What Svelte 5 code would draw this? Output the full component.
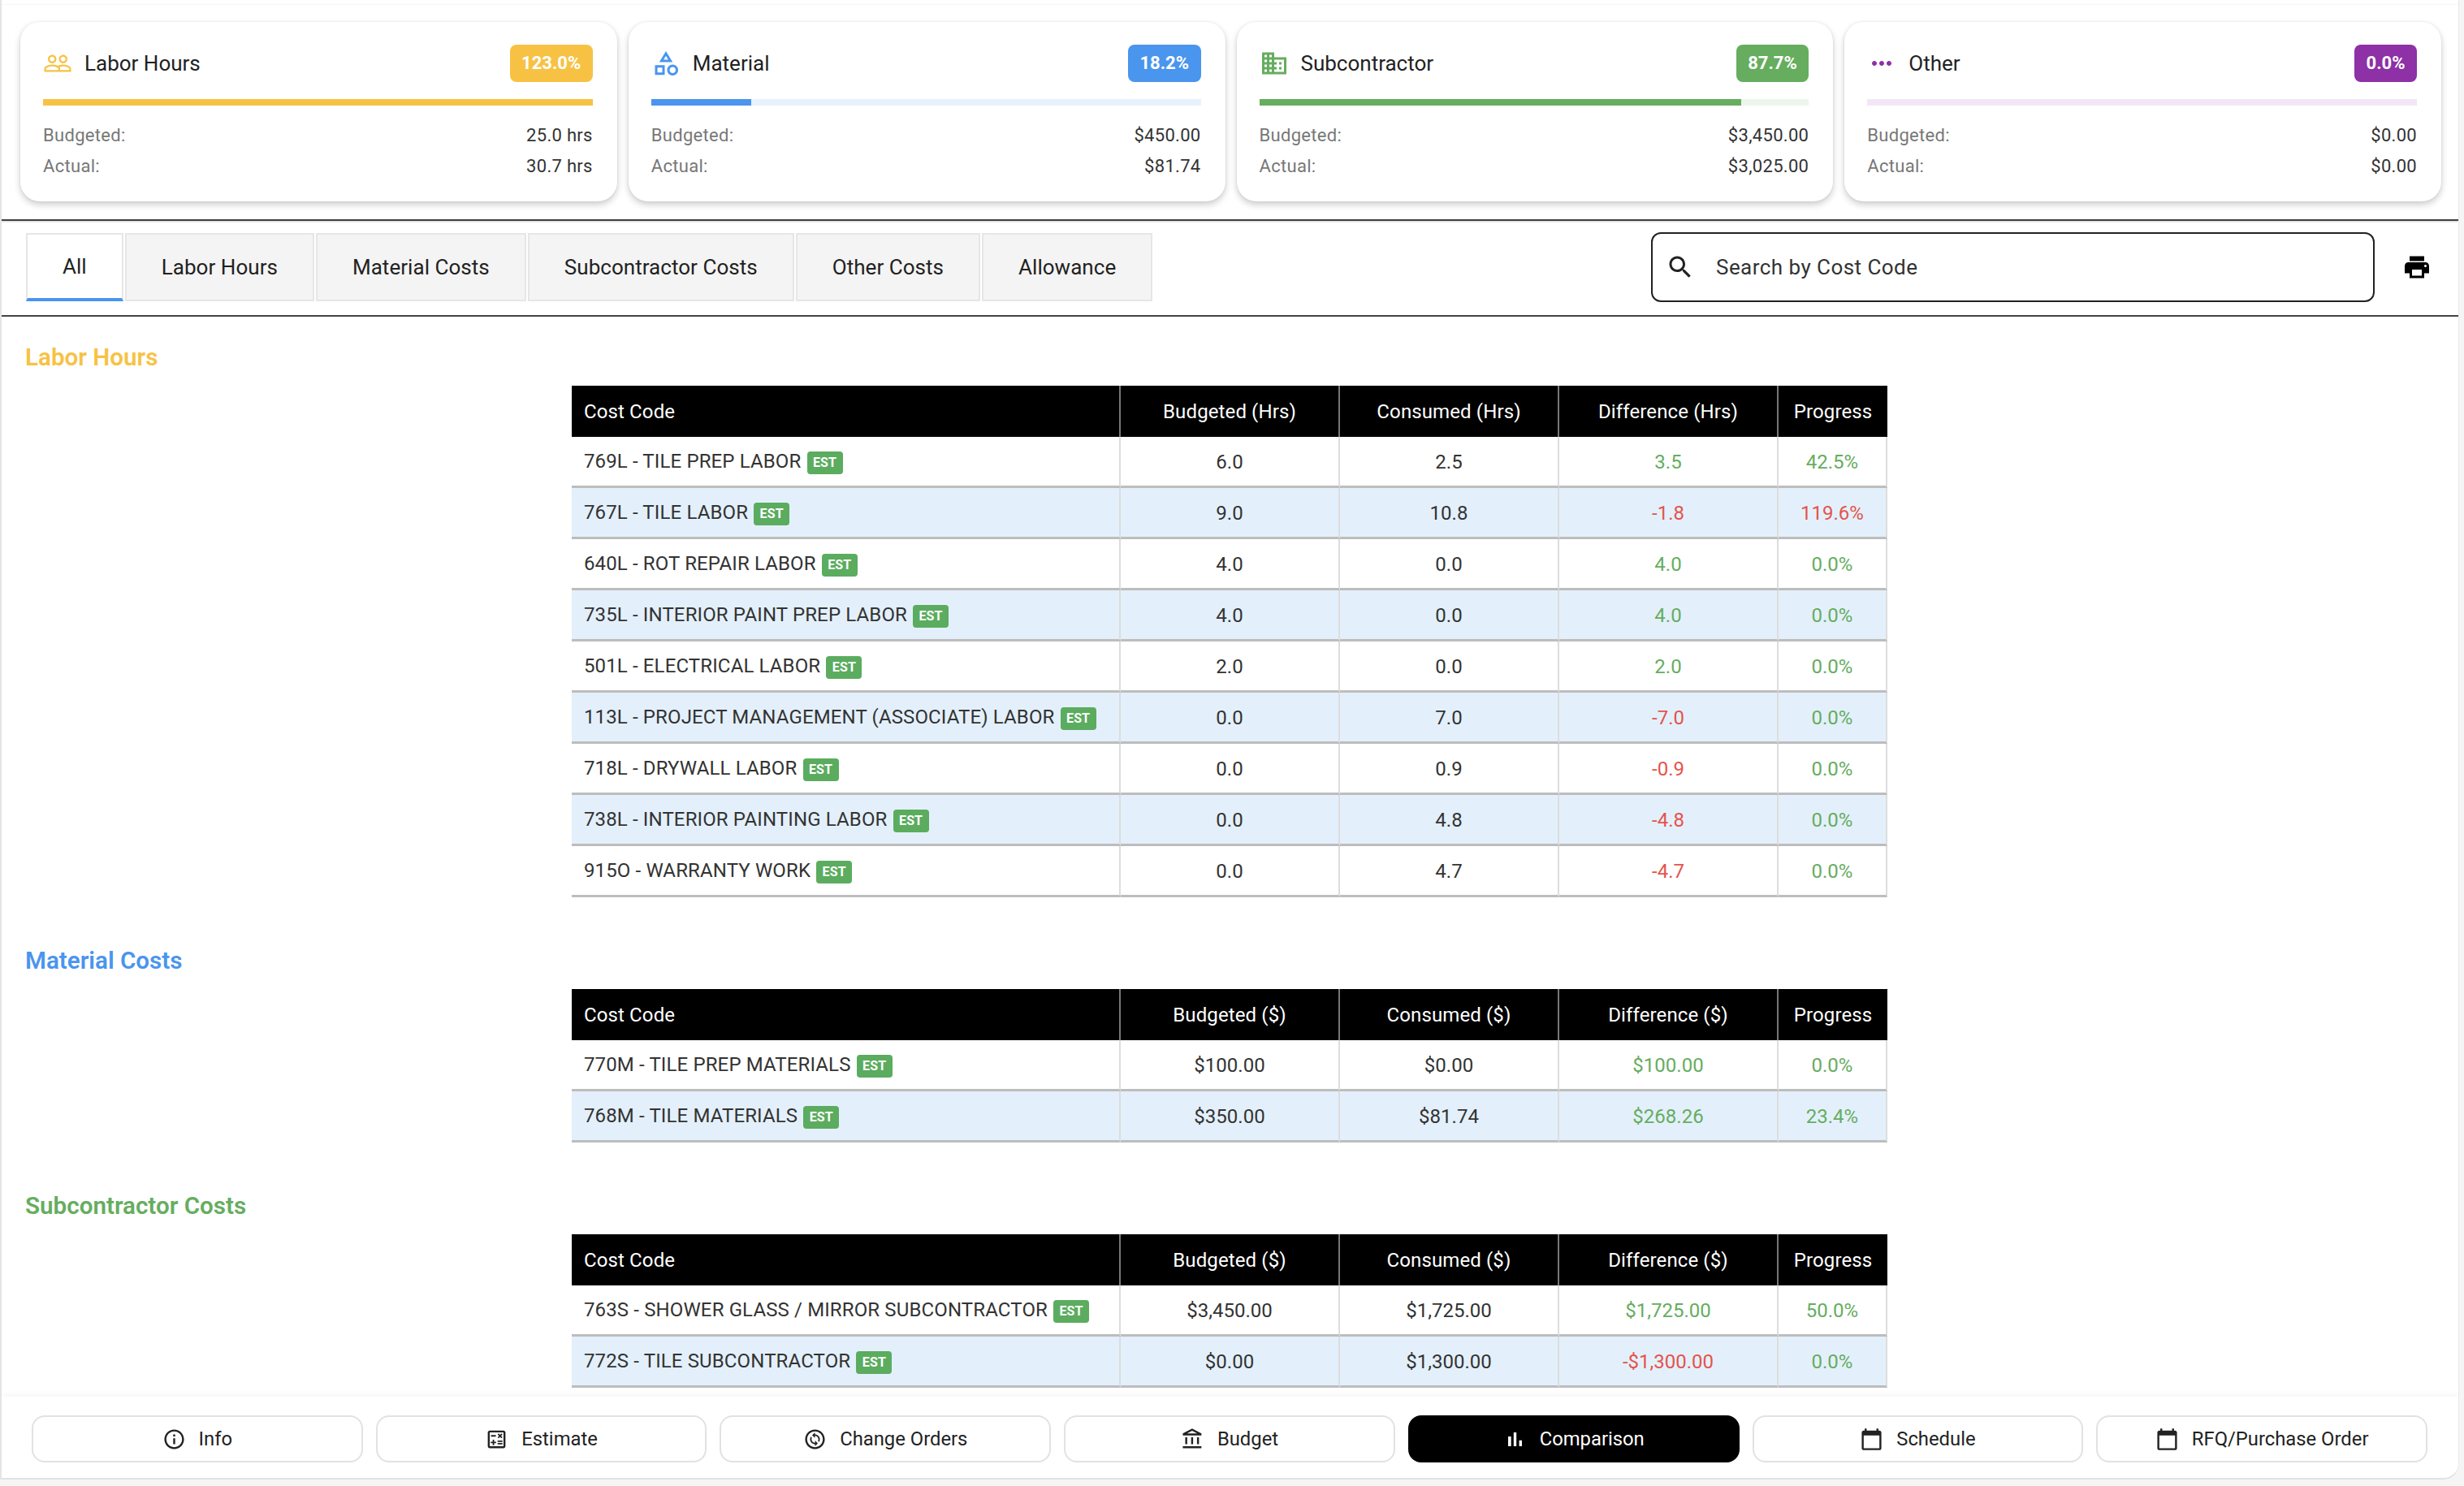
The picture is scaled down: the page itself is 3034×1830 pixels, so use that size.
<script>
  const icons = {
    people: "M16.5 13c-1.2 0-3.07.34-4.5 1-1.43-.67-3.3-1-4.5-1C5.33 13 1 14.08 1 16.25V19h22v-2.75c0-2.17-4.33-3.25-6.5-3.25zm-4 4.5h-10v-1.25c0-.54 2.56-1.75 5-1.75s5 1.21 5 1.75v1.25zm9 0H14v-1.25c0-.46-.2-.86-.52-1.22.88-.3 1.96-.53 3.02-.53 2.44 0 5 1.21 5 1.75v1.25zM7.5 12c1.93 0 3.5-1.57 3.5-3.5S9.43 5 7.5 5 4 6.57 4 8.5 5.57 12 7.5 12zm0-5.5c1.1 0 2 .9 2 2s-.9 2-2 2-2-.9-2-2 .9-2 2-2zm9 5.5c1.93 0 3.5-1.57 3.5-3.5S18.43 5 16.5 5 13 6.57 13 8.5s1.57 3.5 3.5 3.5zm0-5.5c1.1 0 2 .9 2 2s-.9 2-2 2-2-.9-2-2 .9-2 2-2z",
    category: "M12 2l-5.5 9h11L12 2zm0 3.84L13.93 9h-3.87L12 5.84zM17.5 13c-2.49 0-4.5 2.01-4.5 4.5s2.01 4.5 4.5 4.5 4.5-2.01 4.5-4.5-2.01-4.5-4.5-4.5zm0 7c-1.38 0-2.5-1.12-2.5-2.5s1.12-2.5 2.5-2.5 2.5 1.12 2.5 2.5-1.12 2.5-2.5 2.5zM3 21.5h8v-8H3v8zm2-6h4v4H5v-4z",
    domain: "M12 7V3H2v18h20V7H12zM6 19H4v-2h2v2zm0-4H4v-2h2v2zm0-4H4V9h2v2zm0-4H4V5h2v2zm4 12H8v-2h2v2zm0-4H8v-2h2v2zm0-4H8V9h2v2zm0-4H8V5h2v2zm10 12h-8v-2h2v-2h-2v-2h2v-2h-2V9h8v10zm-2-8h-2v2h2v-2zm0 4h-2v2h2v-2z",
    more: "M6 10c-1.1 0-2 .9-2 2s.9 2 2 2 2-.9 2-2-.9-2-2-2zm12 0c-1.1 0-2 .9-2 2s.9 2 2 2 2-.9 2-2-.9-2-2-2zm-6 0c-1.1 0-2 .9-2 2s.9 2 2 2 2-.9 2-2-.9-2-2-2z",
    search: "M15.5 14h-.79l-.28-.27C15.41 12.59 16 11.11 16 9.5 16 5.91 13.09 3 9.5 3S3 5.91 3 9.5 5.91 16 9.5 16c1.61 0 3.09-.59 4.23-1.57l.27.28v.79l5 4.99L20.49 19l-4.99-5zm-6 0C7.01 14 5 11.99 5 9.5S7.01 5 9.5 5 14 7.01 14 9.5 11.99 14 9.5 14z",
    print: "M19 8H5c-1.66 0-3 1.34-3 3v6h4v4h12v-4h4v-6c0-1.66-1.34-3-3-3zm-3 11H8v-5h8v5zm3-7c-.55 0-1-.45-1-1s.45-1 1-1 1 .45 1 1-.45 1-1 1zm-1-9H6v4h12V3z",
    info: "M11 7h2v2h-2zm0 4h2v6h-2zm1-9C6.48 2 2 6.48 2 12s4.48 10 10 10 10-4.48 10-10S17.52 2 12 2zm0 18c-4.41 0-8-3.59-8-8s3.59-8 8-8 8 3.59 8 8-3.59 8-8 8z",
    calc: "M19 3H5c-1.1 0-2 .9-2 2v14c0 1.1.9 2 2 2h14c1.1 0 2-.9 2-2V5c0-1.1-.9-2-2-2zm0 16H5V5h14v14zM6.25 7.72h5v1.5h-5zM13 15.75h5v1.5h-5zM13 13.25h5v1.5h-5zM8 18h1.5v-2h2v-1.5h-2v-2H8v2H6V16h2zM14.09 10.95l1.41-1.41 1.41 1.41 1.06-1.06-1.41-1.42 1.41-1.41L16.91 6 15.5 7.41 14.09 6l-1.06 1.06 1.41 1.41-1.41 1.42z",
    change: "M12 2C6.48 2 2 6.48 2 12s4.48 10 10 10 10-4.48 10-10S17.52 2 12 2zm0 18c-4.41 0-8-3.59-8-8s3.59-8 8-8 8 3.59 8 8-3.59 8-8 8zM12.06 19v-2.01H12c-1.28 0-2.56-.49-3.54-1.46-1.71-1.71-1.92-4.35-.64-6.29l1.1 1.1c-.71 1.33-.53 3.01.59 4.13.7.7 1.62 1.03 2.54 1.01v-2.14l2.83 2.83L12.06 19zm4.11-4.24l-1.1-1.1c.71-1.33.53-3.01-.59-4.13C13.79 8.84 12.9 8.5 12 8.5h-.06v2.15L9.11 7.83 11.94 5v2.02c1.3-.02 2.61.45 3.6 1.45 1.7 1.7 1.91 4.35.63 6.29z",
    bank: "M6.5 10h-2v7h2v-7zm6 0h-2v7h2v-7zm8.5 9H2v2h19v-2zm-2.5-9h-2v7h2v-7zm-7-6.74L16.71 6H6.29l5.21-2.74m0-2.26L2 6v2h19V6l-9.5-5z",
    bars: "M5 9.2h3V19H5zM10.6 5h2.8v14h-2.8zm5.6 8H19v6h-2.8z",
    calendar: "M20 3h-1V1h-2v2H7V1H5v2H4c-1.1 0-2 .9-2 2v16c0 1.1.9 2 2 2h16c1.1 0 2-.9 2-2V5c0-1.1-.9-2-2-2zm0 18H4V8h16v13z"
  };

  const cards = [
    { title: "Labor Hours", icon: "people", color: "#f7c244", track: "#fdf3da", pct: "123.0%", fill: 100, budgeted: "25.0 hrs", actual: "30.7 hrs" },
    { title: "Material", icon: "category", color: "#4a95ee", track: "#e7f2fd", pct: "18.2%", fill: 18.2, budgeted: "$450.00", actual: "$81.74" },
    { title: "Subcontractor", icon: "domain", color: "#66ad5f", track: "#edf6ed", pct: "87.7%", fill: 87.7, budgeted: "$3,450.00", actual: "$3,025.00" },
    { title: "Other", icon: "more", color: "#8e30a6", track: "#f3e6f7", pct: "0.0%", fill: 0, budgeted: "$0.00", actual: "$0.00" }
  ];

  const tabs = ["All", "Labor Hours", "Material Costs", "Subcontractor Costs", "Other Costs", "Allowance"];

  const sections = [
    {
      title: "Labor Hours", color: "#f7c244", unit: "Hrs",
      rows: [
        ["769L - TILE PREP LABOR", "6.0", "2.5", "3.5", "42.5%"],
        ["767L - TILE LABOR", "9.0", "10.8", "-1.8", "119.6%", "red"],
        ["640L - ROT REPAIR LABOR", "4.0", "0.0", "4.0", "0.0%"],
        ["735L - INTERIOR PAINT PREP LABOR", "4.0", "0.0", "4.0", "0.0%"],
        ["501L - ELECTRICAL LABOR", "2.0", "0.0", "2.0", "0.0%"],
        ["113L - PROJECT MANAGEMENT (ASSOCIATE) LABOR", "0.0", "7.0", "-7.0", "0.0%"],
        ["718L - DRYWALL LABOR", "0.0", "0.9", "-0.9", "0.0%"],
        ["738L - INTERIOR PAINTING LABOR", "0.0", "4.8", "-4.8", "0.0%"],
        ["915O - WARRANTY WORK", "0.0", "4.7", "-4.7", "0.0%"]
      ]
    },
    {
      title: "Material Costs", color: "#4a95ee", unit: "$",
      rows: [
        ["770M - TILE PREP MATERIALS", "$100.00", "$0.00", "$100.00", "0.0%"],
        ["768M - TILE MATERIALS", "$350.00", "$81.74", "$268.26", "23.4%"]
      ]
    },
    {
      title: "Subcontractor Costs", color: "#66ad5f", unit: "$",
      rows: [
        ["763S - SHOWER GLASS / MIRROR SUBCONTRACTOR", "$3,450.00", "$1,725.00", "$1,725.00", "50.0%"],
        ["772S - TILE SUBCONTRACTOR", "$0.00", "$1,300.00", "-$1,300.00", "0.0%"]
      ]
    }
  ];

  const navItems = [
    { label: "Info", icon: "info" },
    { label: "Estimate", icon: "calc" },
    { label: "Change Orders", icon: "change" },
    { label: "Budget", icon: "bank" },
    { label: "Comparison", icon: "bars", active: true },
    { label: "Schedule", icon: "calendar" },
    { label: "RFQ/Purchase Order", icon: "calendar" }
  ];

  let activeTab = $state("All");
</script>

{#snippet icon(name, size, color = "currentColor")}
  <svg class="icon" width={size} height={size} viewBox="0 0 24 24" fill={color}><path d={icons[name]} /></svg>
{/snippet}

<div class="page">
  <div class="shell">
    <div class="summary">
      {#each cards as card}
        <div class="card">
          <div class="card-head">
            {@render icon(card.icon, 36, card.color)}
            <span class="card-title">{card.title}</span>
            <span class="badge" style="background: {card.color}">{card.pct}</span>
          </div>
          <div class="track" style="background: {card.track}">
            <div class="fill" style="width: {card.fill}%; background: {card.color}"></div>
          </div>
          <div class="stat"><span class="stat-label">Budgeted:</span><span>{card.budgeted}</span></div>
          <div class="stat"><span class="stat-label">Actual:</span><span>{card.actual}</span></div>
        </div>
      {/each}
    </div>

    <div class="toolbar">
      <div class="tabs">
        {#each tabs as tab}
          <button type="button" class="tab" class:selected={activeTab === tab} onclick={() => (activeTab = tab)}>{tab}</button>
        {/each}
      </div>
      <div class="search">
        {@render icon("search", 36, "#222")}
        <span>Search by Cost Code</span>
      </div>
      <button type="button" class="print">{@render icon("print", 36, "#000")}</button>
    </div>

    <div class="content">
      {#each sections as section}
        <section>
          <h2 style="color: {section.color}">{section.title}</h2>
          <table>
            <thead>
              <tr>
                <th class="code">Cost Code</th>
                <th>Budgeted ({section.unit})</th>
                <th>Consumed ({section.unit})</th>
                <th>Difference ({section.unit})</th>
                <th>Progress</th>
              </tr>
            </thead>
            <tbody>
              {#each section.rows as row}
                {@const over = row[3].startsWith("-")}
                <tr>
                  <td class="code">{row[0]} <span class="est">EST</span></td>
                  <td>{row[1]}</td>
                  <td>{row[2]}</td>
                  <td class={over ? "bad" : "good"}>{row[3]}</td>
                  <td class={row[5] === "red" ? "bad" : "good"}>{row[4]}</td>
                </tr>
              {/each}
            </tbody>
          </table>
        </section>
      {/each}
    </div>

    <nav>
      {#each navItems as item}
        <button type="button" class="nav-btn" class:active={item.active}>
          {@render icon(item.icon, 29)}
          {item.label}
        </button>
      {/each}
    </nav>
  </div>
</div>

<style>
  :global(body) {
    margin: 0;
    background: #f5f5f5;
  }

  .page {
    width: 3034px;
    height: 1830px;
    overflow: hidden;
    font-family: Roboto, "Liberation Sans", sans-serif;
    color: #222;
  }

  .shell {
    box-sizing: border-box;
    width: 3028px;
    height: 1822px;
    padding-top: 5px;
    display: flex;
    flex-direction: column;
    background: #fff;
    border-left: 2px solid #e4e4e4;
    border-right: 1px solid #e8e8e8;
    border-bottom: 2px solid #e2e2e2;
    border-bottom-right-radius: 20px;
    overflow: hidden;
  }

  .icon {
    display: block;
    flex: none;
  }

  .summary {
    display: grid;
    grid-template-columns: repeat(4, 1fr);
    gap: 14px;
    padding: 21px 21px 22px 23px;
    flex: none;
    border-top: 1px solid #f7f7f7;
    border-bottom: 2px solid #444;
    box-shadow: 0 1px 2px rgba(0, 0, 0, 0.2);
    position: relative;
  }

  .card {
    box-sizing: border-box;
    height: 221px;
    padding: 28px 30px 0 28px;
    background: #fff;
    border-radius: 24px;
    box-shadow: 0 4px 8px rgba(0, 0, 0, 0.2), 0 0 3px rgba(0, 0, 0, 0.08);
  }

  .card-head {
    display: flex;
    align-items: center;
    height: 46px;
    gap: 15px;
    margin-bottom: 21px;
  }

  .card-title {
    flex: 1;
    font-size: 26px;
  }

  .badge {
    height: 46px;
    line-height: 46px;
    padding: 0 14.5px;
    border-radius: 8px;
    font-size: 22px;
    font-weight: 700;
    color: #fff;
  }

  .track {
    height: 8px;
    margin-bottom: 18px;
    overflow: hidden;
  }

  .fill {
    height: 100%;
  }

  .stat {
    display: flex;
    justify-content: space-between;
    height: 38px;
    line-height: 38px;
    font-size: 22px;
    letter-spacing: 0.3px;
    color: #333;
  }

  .stat-label {
    color: #777;
  }

  .toolbar {
    display: flex;
    align-items: center;
    flex: none;
    height: 118px;
    box-sizing: border-box;
    padding: 0 0 2px 30px;
    border-bottom: 2px solid #444;
    box-shadow: 0 -1px 2px rgba(0, 0, 0, 0.12);
    position: relative;
  }

  .tabs {
    display: flex;
    gap: 2px;
    flex: 1;
  }

  .tab {
    box-sizing: border-box;
    height: 84px;
    padding: 0 43px;
    font: 400 26px Roboto, "Liberation Sans", sans-serif;
    letter-spacing: 0.04px;
    color: #222;
    background: #f4f4f4;
    border: 2px solid #e6e6e6;
    cursor: pointer;
  }

  .tab.selected {
    background: #fff;
    border-bottom: 4px solid #4a95ee;
  }

  .search {
    box-sizing: border-box;
    display: flex;
    align-items: center;
    gap: 26px;
    width: 891px;
    height: 86px;
    padding: 0 16px;
    border: 2px solid #222;
    border-radius: 12px;
    font-size: 26px;
    letter-spacing: 0.45px;
    color: #333;
  }

  .print {
    display: block;
    margin: 0 33px 0 34px;
    padding: 0;
    border: 0;
    background: none;
    cursor: pointer;
  }

  .content {
    flex: 1;
    min-height: 0;
    overflow: hidden;
    padding-left: 29px;
    position: relative;
  }

  section {
    padding: 31px 0 59px;
  }

  section + section {
    padding-top: 0;
  }

  h2 {
    margin: 0 0 18px;
    height: 36px;
    line-height: 38px;
    font-size: 29.6px;
    font-weight: 600;
  }

  table {
    width: 1620px;
    margin-left: 673px;
    border-collapse: separate;
    border-spacing: 0;
    table-layout: fixed;
    font-size: 24px;
  }

  th {
    box-sizing: border-box;
    height: 63px;
    width: 270px;
    background: #000;
    color: #fff;
    font-weight: 400;
    letter-spacing: 0.12px;
    text-align: center;
    padding: 0;
    border-right: 2px solid #777;
  }

  th.code {
    width: 676px;
    text-align: left;
    padding-left: 15px;
  }

  th:last-child {
    width: 134px;
    border-right: 0;
  }

  td {
    box-sizing: border-box;
    height: 63px;
    padding: 1px 0 0;
    text-align: center;
    color: #333;
    border-right: 2px solid #ddd;
    border-bottom: 3px solid #bdbdbd;
  }

  td.code {
    text-align: left;
    padding-left: 15px;
    letter-spacing: 0.13px;
  }

  tbody tr:nth-child(even) td {
    background: #e3f0fb;
  }

  td.good {
    color: #66ad5f;
  }

  td.bad {
    color: #e5534b;
  }

  .est {
    display: inline-block;
    box-sizing: border-box;
    height: 28px;
    line-height: 28px;
    width: 44px;
    margin-left: 1px;
    text-align: center;
    vertical-align: 1px;
    border-radius: 4px;
    background: #5bac5f;
    color: #fff;
    font-size: 16px;
    font-weight: 700;
  }

  nav {
    flex: none;
    display: grid;
    grid-template-columns: repeat(7, 1fr);
    gap: 16px;
    height: 100px;
    box-sizing: border-box;
    padding: 23px 38px 0 37px;
    background: #fff;
    box-shadow: 0 -3px 8px rgba(0, 0, 0, 0.04);
    position: relative;
  }

  .nav-btn {
    box-sizing: border-box;
    display: flex;
    align-items: center;
    justify-content: center;
    gap: 16px;
    height: 58px;
    background: #fff;
    border: 2px solid #e2e2e2;
    border-radius: 16px;
    font: 400 23.8px Roboto, "Liberation Sans", sans-serif;
    color: #222;
    cursor: pointer;
  }

  .nav-btn.active {
    background: #000;
    border-color: #000;
    color: #fff;
  }
</style>
